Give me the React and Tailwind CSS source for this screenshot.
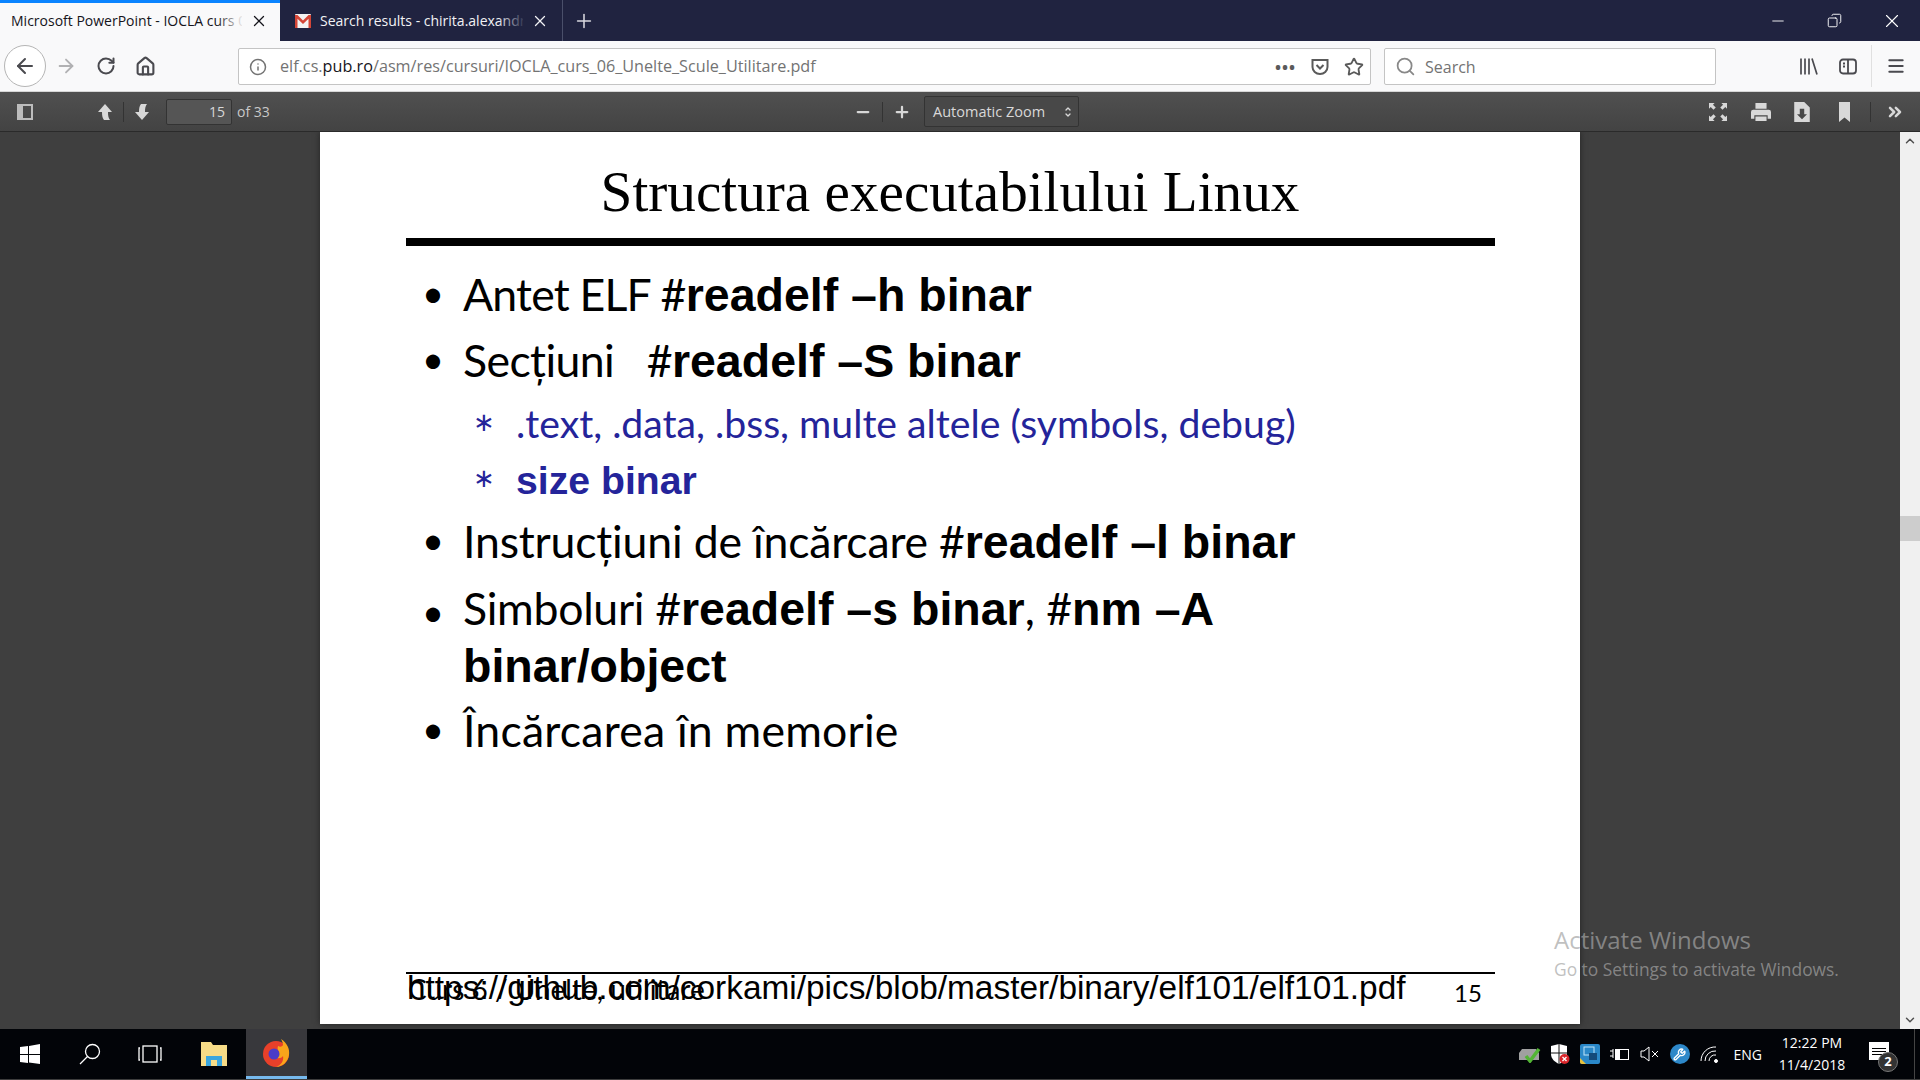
import React from 'react';
import { ArrowLeft, ArrowRight, RotateCw, Home, Info, Star, Search, X, Plus, Minus, Menu, ChevronUp, ChevronDown, ChevronsRight, Copy, Wrench } from 'lucide-react';

const SERIF = { fontFamily: '"Liberation Serif", serif' };

function Tab({ active, icon, title, fade, className = '' }) {
  return (
    <div className={`relative flex h-[41px] items-center pl-[11px] text-[14px] ${className} ${active ? 'bg-[#f9f9fa] border-t-[3px] border-[#0a84ff] pb-[3px] text-[#15141a]' : 'border-r border-[#4a4f6a] text-[#f2f2f5]'}`}>
      {icon}
      <span className="flex-1 overflow-hidden whitespace-nowrap">{title}</span>
      <div className={`absolute top-0 bottom-0 right-[36px] w-[28px] bg-gradient-to-r from-transparent ${fade}`} />
      <X className="ml-2 h-[18px] w-[18px] shrink-0" strokeWidth={1.7} />
    </div>
  );
}

function GmailIcon() {
  return (
    <svg viewBox="0 0 16 14" className="ml-[4px] mr-[9px] h-[14px] w-[16px] shrink-0">
      <rect width="16" height="14" rx="1" fill="#f3f3f3" />
      <path d="M0 1h2.500L8 6.500 13.500 1H16v13h-2.500V4.800L8 10 2.500 4.800V14H0z" fill="#d44638" />
    </svg>
  );
}

function Bullet({ children }) {
  return (
    <div className="flex">
      <span className="w-[57px] pl-[16px] pt-[3px] text-[38px] leading-[56px]">•</span>
      <div className="flex-1">{children}</div>
    </div>
  );
}

function SubBullet({ children }) {
  return (
    <div className="flex pl-[67px] text-[#24249a]">
      <span className="w-[43px] text-[26px] leading-[56px]" style={{ fontFamily: '"DejaVu Sans", sans-serif' }}>∗</span>
      <div className="flex-1">{children}</div>
    </div>
  );
}

function B({ children, size = 'text-[46.500px]' }) {
  return <span className={`font-bold ${size}`} style={{ fontFamily: '"Liberation Sans", sans-serif' }}>{children}</span>;
}

function Slide() {
  return (
    <div className="relative h-[892px] w-[1260px] bg-white text-black shadow-[0_0_6px_#222]" style={{ fontFamily: 'Lato, sans-serif' }}>
      <div className="pt-[25px] text-center text-[57.200px] leading-[70px]" style={SERIF}>Structura executabilului Linux</div>
      <div className="ml-[86px] mr-[85px] mt-[11px] h-[8px] bg-black" />
      <div className="pl-[86px] pr-[80px] pt-[16px] text-[44.600px]">
        <div className="flex h-[67px] items-center"><Bullet><span className="tracking-[-0.8px]">Antet ELF #</span><B>readelf –h binar</B></Bullet></div>
        <div className="flex h-[66px] items-center"><Bullet><span className="tracking-[-0.6px]">Secțiuni &nbsp; #</span><B>readelf –S binar</B></Bullet></div>
        <div className="flex h-[56px] items-center text-[39.200px]"><SubBullet>.text, .data, .bss, multe altele (symbols, debug)</SubBullet></div>
        <div className="flex h-[59px] items-center text-[39.200px]"><SubBullet><B size="text-[39.200px]">size binar</B></SubBullet></div>
        <div className="flex h-[66px] items-center"><Bullet><span className="tracking-[-0.2px]">Instrucțiuni de încărcare #</span><B>readelf –l binar</B></Bullet></div>
        <div className="flex h-[122px] items-start pt-[4px]">
          <Bullet>
            <div className="leading-[56px]"><span className="tracking-[-0.3px]">Simboluri #</span><B>readelf –s binar</B>, #<B>nm –A</B></div>
            <div className="leading-[56px]"><B>binar/object</B></div>
          </Bullet>
        </div>
        <div className="flex h-[65px] items-center"><Bullet><span className="tracking-[0.2px]">Încărcarea în memorie</span></Bullet></div>
      </div>
      <div className="absolute bottom-[50px] left-[86px] right-[85px] h-[2px] bg-black" />
      <div className="absolute bottom-[18px] left-[88px] text-[28px] leading-[34px]">Curs 6 / Unelte, utilitare</div>
      <div className="absolute bottom-[18px] left-[87px] text-[33.400px] leading-[36px]" style={{ fontFamily: '"Liberation Sans", sans-serif' }}>https://github.com/corkami/pics/blob/master/binary/elf101/elf101.pdf</div>
      <div className="absolute bottom-[13px] left-[1134px] text-[24px]">15</div>
    </div>
  );
}

function TraySlot({ children }) {
  return <div className="flex w-[30px] items-center justify-center">{children}</div>;
}

function TrayIcons() {
  return (
    <div className="flex items-center text-white">
      <TraySlot><svg viewBox="0 0 22 18" className="h-[18px] w-[22px]"><path d="M3 4h14l3 4v7H0V8z" fill="#a0a0a0" /><path d="M7 11l4 5 9-12" fill="none" stroke="#52b534" strokeWidth="3.500" /></svg></TraySlot>
      <TraySlot>
        <svg viewBox="0 0 20 20" className="h-[20px] w-[20px]"><path d="M1 2l8-2 8 2v8c0 5-4 8-8 10-4-2-8-5-8-10z" fill="#fff" /><path d="M9 0v20M1 9h16" stroke="#111" strokeWidth="1" /><circle cx="14.500" cy="15" r="5" fill="#d9252a" /><path d="M12.500 13l4 4M16.500 13l-4 4" stroke="#fff" strokeWidth="1.300" /></svg>
      </TraySlot>
      <TraySlot>
        <svg viewBox="0 0 20 20" className="h-[20px] w-[20px]"><rect width="20" height="20" rx="2" fill="#2a88c8" /><rect x="4" y="3" width="10" height="8" fill="none" stroke="#bfe3f7" /><rect x="9" y="9" width="8" height="7" fill="#144a7a" /><path d="M0 14l6 6H2a2 2 0 0 1-2-2z" fill="#e8c13a" /></svg>
      </TraySlot>
      <TraySlot><svg viewBox="0 0 20 14" className="h-[14px] w-[20px]" fill="none" stroke="#fff"><rect x="5.500" y="2.500" width="13" height="10" /><rect x="5.500" y="2.500" width="4" height="10" fill="#fff" /><path d="M0 4h3M0 9h3M3 2v9" /></svg></TraySlot>
      <TraySlot><svg viewBox="0 0 20 16" className="h-[16px] w-[20px]" fill="none" stroke="#fff"><path d="M1 5h3l5-4v14l-5-4H1zM12 5l6 6M18 5l-6 6" /></svg></TraySlot>
      <TraySlot><div className="flex h-[20px] w-[20px] items-center justify-center rounded-full bg-[#2d88c9]"><Wrench className="h-[13px] w-[13px]" strokeWidth={2.500} /></div></TraySlot>
      <TraySlot><svg viewBox="0 0 20 18" className="h-[18px] w-[20px]" fill="none" stroke="#fff"><path d="M1 16A14 14 0 0 1 16 2M5 16A10 10 0 0 1 16 6M9 16a6 6 0 0 1 7-6" /><circle cx="16" cy="16" r="1.500" fill="#fff" /></svg></TraySlot>
    </div>
  );
}

export default function App() {
  return (
    <div className="relative flex h-[1080px] w-[1920px] flex-col overflow-hidden bg-[#3d3d3d]" style={{ fontFamily: '"Open Sans", sans-serif' }}>
      {/* tab strip */}
      <div className="flex h-[41px] items-center bg-[#202340]">
        <Tab active className="w-[280px] pr-[12px]" title="Microsoft PowerPoint - IOCLA curs 06" fade="to-[#f9f9fa]" />
        <Tab className="w-[283px] pr-[13px]" icon={<GmailIcon />} title="Search results - chirita.alexandra" fade="to-[#202340]" />
        <Plus className="ml-[10px] h-[22px] w-[22px] text-[#d8d8de]" strokeWidth={1.700} />
        <div className="flex-1" />
        <div className="flex items-center text-white">
          <div className="flex w-[57px] justify-center"><Minus className="h-[18px] w-[18px]" strokeWidth={1.200} /></div>
          <div className="flex w-[57px] justify-center"><Copy className="h-[15px] w-[15px] -scale-x-100" strokeWidth={1.500} /></div>
          <div className="flex w-[57px] justify-center"><X className="h-[22px] w-[22px]" strokeWidth={1.200} /></div>
        </div>
      </div>

      {/* nav bar */}
      <div className="flex h-[51px] items-center border-b border-[#d6d6d6] bg-[#f9f9fa] text-[#4a4a4f]">
        <div className="ml-[4px] flex h-[42px] w-[42px] items-center justify-center rounded-full border border-[#b5b5b5] bg-white"><ArrowLeft className="h-[24px] w-[24px]" /></div>
        <ArrowRight className="ml-[9px] h-[22px] w-[22px] text-[#b1b1b3]" />
        <RotateCw className="ml-[19px] h-[20px] w-[20px]" strokeWidth={2.400} />
        <Home className="ml-[19px] h-[21px] w-[21px]" strokeWidth={2.400} />
        <div className="ml-[82px] flex h-[37px] w-[1133px] items-center rounded-[2px] border border-[#c4c4c4] bg-white pl-[10px] pr-[6px] pt-[1px] text-[16.200px] text-[#737373]">
          <Info className="mr-[13px] h-[18px] w-[18px]" />
          <span>elf.cs.<span className="text-[#15141a]">pub.ro</span>/asm/res/cursuri/IOCLA_curs_06_Unelte_Scule_Utilitare.pdf</span>
          <div className="flex-1" />
          <span className="mr-[15px] text-[16px] font-bold tracking-[1px] text-[#5a5a5a]">•••</span>
          <svg viewBox="0 0 18 18" className="mr-[15px] h-[18px] w-[18px]" fill="none" stroke="#5a5a5a" strokeWidth="2"><path d="M1.500 2h15v7a7.500 7 0 0 1-15 0zM5.500 7l3.500 3.500L12.500 7" /></svg>
          <Star className="h-[20px] w-[20px] text-[#5a5a5a]" strokeWidth={2.200} />
        </div>
        <div className="ml-[13px] flex h-[37px] w-[332px] items-center rounded-[2px] border border-[#c4c4c4] bg-white pl-[10px] pt-[1px] text-[16px] text-[#737373]">
          <Search className="mr-[9px] h-[21px] w-[21px] text-[#888]" />Search
        </div>
        <div className="flex-1" />
        <svg viewBox="0 0 18 16" className="mr-[21px] h-[17px] w-[18px]" fill="none" stroke="#4a4a4f" strokeWidth="1.700"><path d="M1 0v16M5 0v16M9 0v16M12 0l5 16" /></svg>
        <svg viewBox="0 0 18 16" className="mr-[14px] h-[17px] w-[18px]" fill="none" stroke="#4a4a4f" strokeWidth="1.800"><rect x="1" y="1" width="16" height="14" rx="3" /><path d="M9 1v14M4 5h2M4 8h2" /></svg>
        <div className="mr-[14px] h-[42px] w-px bg-[#e0e0e0]" />
        <Menu className="mr-[14px] h-[20px] w-[20px]" strokeWidth={2.400} />
      </div>

      {/* pdf toolbar */}
      <div className="flex h-[40px] items-center border-b border-[#2a2a2a] bg-gradient-to-b from-[#505050] to-[#434343] text-[14px] text-[#d8d8d8]">
        <div className="flex w-[854px] items-center">
          <div className="ml-[17px] h-[16px] w-[16px] border-2 border-[#bcbcbc] border-l-[6px]" />
          <svg viewBox="0 0 16 16" className="ml-[64px] h-[16px] w-[16px]" fill="#d8d8d8"><path d="M8 0l7 8h-4c0 4 .5 6 2 8H7C5.500 14 5 12 5 8H1z" /></svg>
          <div className="mx-[10px] h-[20px] w-px bg-[#333]" />
          <svg viewBox="0 0 16 16" className="h-[16px] w-[16px]" fill="#d8d8d8"><path d="M8 16l7-8h-4c0-4 .5-6 2-8H7C5.500 2 5 4 5 8H1z" /></svg>
          <div className="ml-[16px] flex h-[26px] w-[66px] items-center justify-end rounded-[2px] border border-[#333] bg-[#555] pr-[6px] text-[14px]">15</div>
          <span className="ml-[5px] text-[#c8c8c8]">of 33</span>
        </div>
        <Minus className="h-[18px] w-[18px]" strokeWidth={3} />
        <div className="mx-[10px] h-[20px] w-px bg-[#333]" />
        <Plus className="h-[18px] w-[18px]" strokeWidth={3} />
        <div className="ml-[13px] flex h-[31px] w-[155px] items-center justify-between rounded-[2px] border border-[#333] bg-[#484848] pl-[8px] pr-[6px] text-[14.500px] whitespace-nowrap">
          Automatic Zoom
          <div className="flex flex-col"><ChevronUp className="-mb-[2px] h-[8px] w-[8px]" strokeWidth={4} /><ChevronDown className="h-[8px] w-[8px]" strokeWidth={4} /></div>
        </div>
        <div className="flex-1" />
        <svg viewBox="0 0 16 16" className="mr-[24px] h-[18px] w-[18px]" fill="#d8d8d8"><path d="M0 0h5L3.500 1.500 6 4 4 6 1.500 3.500 0 5zM16 0v5l-1.500-1.500L12 6l-2-2 2.500-2.500L11 0zM0 16v-5l1.500 1.500L4 10l2 2-2.500 2.500L5 16zM16 16h-5l1.500-1.500L10 12l2-2 2.500 2.500L16 11z" /></svg>
        <svg viewBox="0 0 18 16" className="mr-[23px] h-[18px] w-[20px]" fill="#d8d8d8"><path d="M4 0h10v5H4zM2 6h14a2 2 0 0 1 2 2v6h-3v-3H3v3H0V8a2 2 0 0 1 2-2zM4 12h10v4H4z" /></svg>
        <svg viewBox="0 0 14 18" className="mr-[29px] h-[20px] w-[16px]" fill="#d8d8d8"><path d="M0 0h9l5 5v13H0zM5 6v5H2.500L7 15.500 11.500 11H9V6z" fillRule="evenodd" /></svg>
        <svg viewBox="0 0 10 18" className="mr-[20px] h-[20px] w-[11px]" fill="#d8d8d8"><path d="M0 0h10v18l-5-4-5 4z" /></svg>
        <div className="mr-[14px] h-[20px] w-px bg-[#333]" />
        <ChevronsRight className="mr-[15px] h-[20px] w-[20px]" strokeWidth={3} />
      </div>

      {/* viewer */}
      <div className="flex h-[897px] bg-[#3f3f3f]">
        <div className="flex flex-1 justify-center overflow-hidden">
          <Slide />
        </div>
        <div className="flex w-[20px] flex-col items-center bg-[#f0f0f0] text-[#505050]">
          <ChevronUp className="mt-[2px] h-[14px] w-[14px]" strokeWidth={2.500} />
          <div className="mt-[368px] h-[25px] w-[20px] bg-[#cdcdcd]" />
          <div className="flex-1" />
          <ChevronDown className="mb-[2px] h-[14px] w-[14px]" strokeWidth={2.500} />
        </div>
      </div>

      {/* taskbar */}
      <div className="flex h-[50px] items-center bg-[#020408] text-white">
        <svg viewBox="0 0 20 20" className="ml-[20px] h-[20px] w-[20px]" fill="#fff"><path d="M0 3l8-1v8H0zM9 2l11-2v10H9zM0 11h8v8l-8-1zM9 11h11v9L9 18.500z" /></svg>
        <svg viewBox="0 0 22 22" className="ml-[39px] h-[22px] w-[22px]" fill="none" stroke="#fff" strokeWidth="1.300"><circle cx="13.500" cy="8.500" r="7" /><path d="M8.500 13.500L1 21" /></svg>
        <svg viewBox="0 0 24 18" className="ml-[37px] h-[18px] w-[24px]" fill="none" stroke="#fff" strokeWidth="1.300"><rect x="5" y="1" width="14" height="16" /><path d="M2 3H1v12h1M22 3h1v12h-1" /></svg>
        <svg viewBox="0 0 28 24" className="ml-[38px] h-[24px] w-[28px]"><path d="M1 0h10l2 3h14v21H1z" fill="#f7dc87" /><path d="M6 14h16v10h-5v-6h-6v6H6z" fill="#3aa6de" /></svg>
        <div className="ml-[18px] flex h-[50px] w-[61px] items-center justify-center border-b-[3px] border-[#76b9ed] bg-[#38383c] pr-[2px]">
          <svg viewBox="0 0 28 28" className="h-[28px] w-[28px]"><circle cx="14" cy="15" r="13" fill="#e8402a" /><path d="M19 0c6 4 9 10 8 16-1 7-7 12-13 12 5-2 8-6 7-11-2 3-7 3-9 0 3 0 5-2 5-4-1-2-2-3-1-6 2 1 4 1 5-1 0-2-1-4-2-6z" fill="#f9a51a" /><circle cx="12" cy="15" r="5.500" fill="#4a3cc8" /></svg>
        </div>
        <div className="flex-1" />
        <TrayIcons />
        <span className="ml-[9px] text-[14px]">ENG</span>
        <div className="ml-[10px] flex w-[80px] flex-col items-center text-[14px] leading-[22px]"><span>12:22 PM</span><span>11/4/2018</span></div>
        <div className="relative ml-[17px] mb-[6px] mr-[25px] flex h-[18px] w-[20px] flex-col justify-center gap-[2px] bg-white px-[3px]">
          <div className="h-px bg-black" /><div className="h-px bg-black" /><div className="h-px bg-black" />
          <div className="absolute -bottom-[12px] -right-[9px] flex h-[20px] w-[20px] items-center justify-center rounded-full border border-[#777] bg-[#333] text-[13px] font-bold">2</div>
        </div>
        <div className="h-[50px] w-[6px] border-l border-[#444]" />
      </div>

      {/* windows watermark */}
      <div className="absolute left-[1554px] top-[925px] whitespace-nowrap text-[#a4a4a4]/70">
        <div className="text-[24px] leading-[30px]">Activate Windows</div>
        <div className="text-[17.400px] leading-[28px]">Go to Settings to activate Windows.</div>
      </div>
    </div>
  );
}
